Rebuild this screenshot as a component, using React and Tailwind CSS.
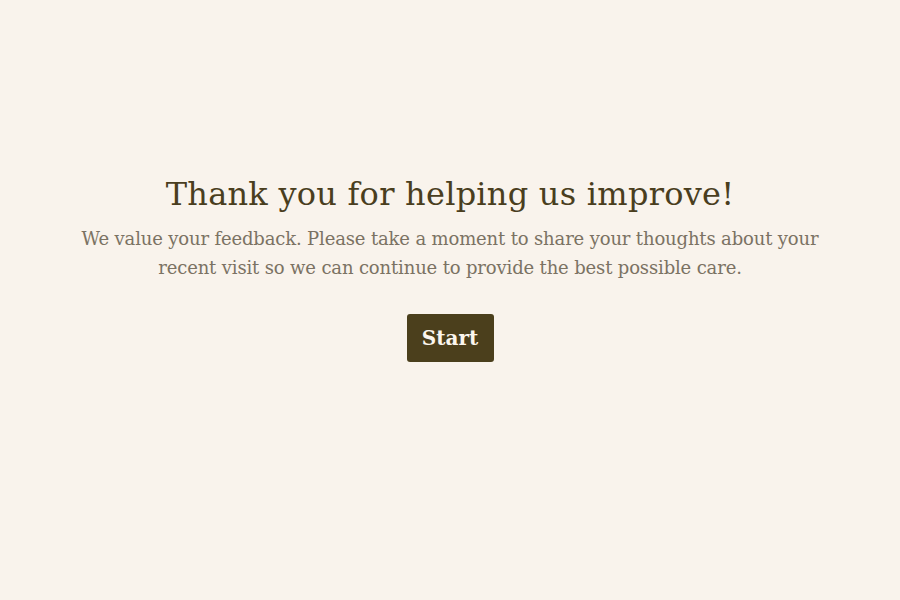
export default function App() {
  return (
    <div
      className="min-h-[600px] w-full bg-[#f9f3ec] flex flex-col items-center pt-[171px]"
      style={{ fontFamily: '"DejaVu Serif", "Liberation Serif", serif' }}
    >
      <h1 className="text-[32px] leading-[46px] text-[#4a3e1e] tracking-[0.25px]">
        Thank you for helping us improve!
      </h1>
      <p className="mt-[7px] w-[770px] text-center text-[18px] leading-[29px] text-[#7b7263] tracking-[-0.15px]">
        We value your feedback. Please take a moment to share your thoughts about your recent visit so we can continue to provide the best possible care.
      </p>
      <button className="mt-[32px] h-[48px] w-[87px] rounded-[3px] bg-[#4b3f1c] text-[#fbf6ee] text-[20px] font-bold">
        Start
      </button>
    </div>
  );
}
